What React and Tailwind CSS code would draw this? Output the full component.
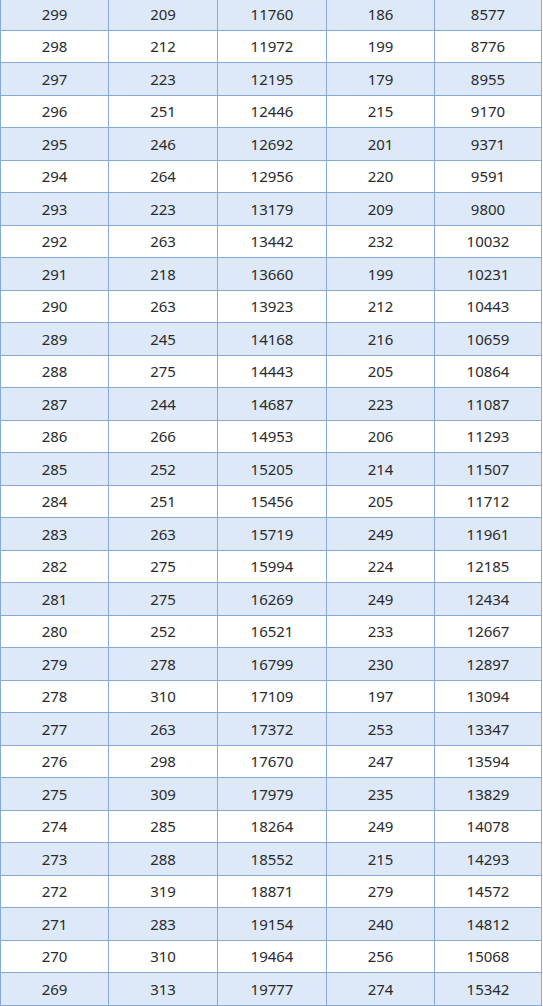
const rows = [
  [299, 209, 11760, 186, 8577],
  [298, 212, 11972, 199, 8776],
  [297, 223, 12195, 179, 8955],
  [296, 251, 12446, 215, 9170],
  [295, 246, 12692, 201, 9371],
  [294, 264, 12956, 220, 9591],
  [293, 223, 13179, 209, 9800],
  [292, 263, 13442, 232, 10032],
  [291, 218, 13660, 199, 10231],
  [290, 263, 13923, 212, 10443],
  [289, 245, 14168, 216, 10659],
  [288, 275, 14443, 205, 10864],
  [287, 244, 14687, 223, 11087],
  [286, 266, 14953, 206, 11293],
  [285, 252, 15205, 214, 11507],
  [284, 251, 15456, 205, 11712],
  [283, 263, 15719, 249, 11961],
  [282, 275, 15994, 224, 12185],
  [281, 275, 16269, 249, 12434],
  [280, 252, 16521, 233, 12667],
  [279, 278, 16799, 230, 12897],
  [278, 310, 17109, 197, 13094],
  [277, 263, 17372, 253, 13347],
  [276, 298, 17670, 247, 13594],
  [275, 309, 17979, 235, 13829],
  [274, 285, 18264, 249, 14078],
  [273, 288, 18552, 215, 14293],
  [272, 319, 18871, 279, 14572],
  [271, 283, 19154, 240, 14812],
  [270, 310, 19464, 256, 15068],
  [269, 313, 19777, 274, 15342],
]

// column widths taken from the reference grid lines
const widths = ['w-[108px]', 'w-[109px]', 'w-[109px]', 'w-[108px]', 'w-[107px]']

export default function App() {
  return (
    <div className="h-[1006px] overflow-hidden bg-white">
      <table
        className="-mt-[3px] w-[541px] table-fixed border-collapse text-[15px] text-[#2b2b2b]"
        style={{ fontFamily: '"Noto Sans", "Open Sans", sans-serif' }}
      >
        <colgroup>
          {widths.map((w, j) => (
            <col key={j} className={w} />
          ))}
        </colgroup>
        <tbody>
          {rows.map((row, i) => (
            <tr key={i} className={`h-[32.5px] ${i % 2 === 0 ? 'bg-[#dde9f8]' : 'bg-white'}`}>
              {row.map((cell, j) => (
                <td key={j} className="border border-[#86a9d6] p-0 pt-px text-center leading-none">
                  {cell}
                </td>
              ))}
            </tr>
          ))}
        </tbody>
      </table>
    </div>
  )
}
